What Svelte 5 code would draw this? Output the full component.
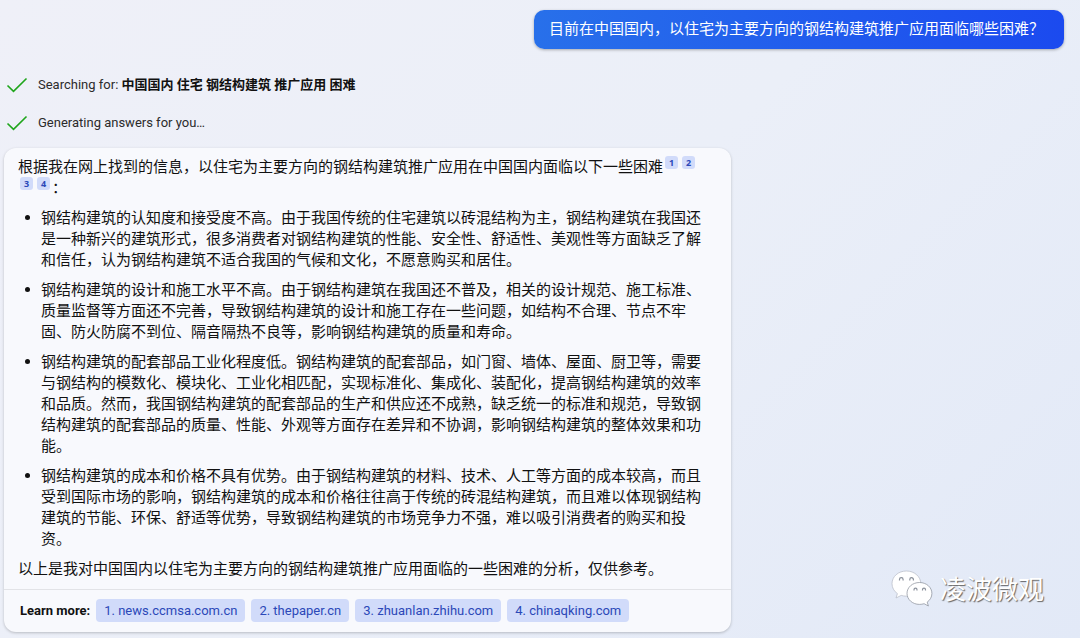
<script>
  const question = '目前在中国国内，以住宅为主要方向的钢结构建筑推广应用面临哪些困难？';
  const keywords = '中国国内 住宅 钢结构建筑 推广应用 困难';
  const points = [
    '钢结构建筑的认知度和接受度不高。由于我国传统的住宅建筑以砖混结构为主，钢结构建筑在我国还是一种新兴的建筑形式，很多消费者对钢结构建筑的性能、安全性、舒适性、美观性等方面缺乏了解和信任，认为钢结构建筑不适合我国的气候和文化，不愿意购买和居住。',
    '钢结构建筑的设计和施工水平不高。由于钢结构建筑在我国还不普及，相关的设计规范、施工标准、质量监督等方面还不完善，导致钢结构建筑的设计和施工存在一些问题，如结构不合理、节点不牢固、防火防腐不到位、隔音隔热不良等，影响钢结构建筑的质量和寿命。',
    '钢结构建筑的配套部品工业化程度低。钢结构建筑的配套部品，如门窗、墙体、屋面、厨卫等，需要与钢结构的模数化、模块化、工业化相匹配，实现标准化、集成化、装配化，提高钢结构建筑的效率和品质。然而，我国钢结构建筑的配套部品的生产和供应还不成熟，缺乏统一的标准和规范，导致钢结构建筑的配套部品的质量、性能、外观等方面存在差异和不协调，影响钢结构建筑的整体效果和功能。',
    '钢结构建筑的成本和价格不具有优势。由于钢结构建筑的材料、技术、人工等方面的成本较高，而且受到国际市场的影响，钢结构建筑的成本和价格往往高于传统的砖混结构建筑，而且难以体现钢结构建筑的节能、环保、舒适等优势，导致钢结构建筑的市场竞争力不强，难以吸引消费者的购买和投资。'
  ];
  const sources = ['news.ccmsa.com.cn', 'thepaper.cn', 'zhuanlan.zhihu.com', 'chinaqking.com'];
</script>

{#snippet check()}
  <svg class="check" viewBox="0 0 22 16" aria-hidden="true">
    <path d="M1.500 8.500 7.500 14.300 20.500 1.500" fill="none" stroke="#1fa51b" stroke-width="1.6" />
  </svg>
{/snippet}

<main>
  <div class="question">{question}</div>

  <div class="status">
    {@render check()}
    <span>Searching for: <strong>{keywords}</strong></span>
  </div>
  <div class="status">
    {@render check()}
    <span>Generating answers for you…</span>
  </div>

  <article>
    <div class="answer">
      <p>
        根据我在网上找到的信息，以住宅为主要方向的钢结构建筑推广应用在中国国内面临以下一些困难{#each sources as _, i}<a class="cite" href="#source-{i + 1}">{i + 1}</a><wbr />{/each}：
      </p>
      <ul>
        {#each points as point}
          <li>{point}</li>
        {/each}
      </ul>
      <p>以上是我对中国国内以住宅为主要方向的钢结构建筑推广应用面临的一些困难的分析，仅供参考。</p>
    </div>
    <footer>
      <b>Learn more:</b>
      {#each sources as source, i}
        <a class="source" id="source-{i + 1}" href="https://{source}">{i + 1}. {source}</a>
      {/each}
    </footer>
  </article>

  <div class="brand">
    <svg viewBox="0 0 42 37" aria-hidden="true">
      <g fill="#fff" stroke="#b4b9c4" stroke-width="0.7">
        <path d="M15.500 1C7.300 1 1 6.500 1 13.700c0 4.100 2.100 7.600 5.400 9.900L5 28l5.200-2.600c1.700.5 3.400.8 5.300.8 8 0 14.300-5.500 14.300-12.500S23.500 1 15.500 1Z" />
        <path stroke="#858b96" d="M28.500 12.500c-7 0-12.500 4.800-12.500 10.900s5.500 11 12.500 11c1.600 0 3.200-.3 4.600-.7l4.300 2.300-1.200-3.900c2.900-2 4.700-5.100 4.700-8.700 0-6.100-5.500-10.900-12.400-10.900Z" />
      </g>
      <g fill="none" stroke="#8a909b" stroke-width="1.200">
        <path d="M8.500 10.500v-1a1.800 1.800 0 0 1 3.600 0v1M18.800 10.500v-1a1.800 1.800 0 0 1 3.600 0v1M23 20.500v-.8a1.500 1.500 0 0 1 3 0v.8M31.500 20.500v-.8a1.500 1.500 0 0 1 3 0v.8" />
      </g>
    </svg>
    <span>凌波微观</span>
  </div>
</main>

<style>
  :global(body) {
    margin: 0;
  }
  main {
    position: relative;
    box-sizing: border-box;
    min-height: 100vh;
    padding: 10px 16px 6px 4px;
    display: flex;
    flex-direction: column;
    align-items: flex-start;
    background: linear-gradient(135deg, #eff0f8 0%, #ebeff8 50%, #e2e9f7 100%);
    color: #111;
    font-family: Roboto, 'Noto Sans CJK SC', sans-serif;
    font-size: 13px;
    line-height: 20px;
  }
  .question {
    align-self: flex-end;
    box-sizing: border-box;
    margin-bottom: 17px;
    padding: 7px 20px 11px 15px;
    border-radius: 10px;
    background: linear-gradient(90deg, #2870ea, #1b4aef);
    box-shadow: 0 1px 3px rgba(0, 0, 0, 0.3);
    color: #fff;
    font: 15px/21px 'Noto Sans CJK SC', sans-serif;
  }
  .status {
    display: flex;
    align-items: center;
    gap: 10px;
    height: 38px;
    padding-left: 2px;
    color: #2b2b2b;
  }
  .status strong {
    color: #111;
  }
  .check {
    width: 22px;
    height: 16px;
  }
  article {
    width: 69%;
    max-width: 727px;
    margin-top: 6px;
    border-radius: 12px;
    background: #f8f9fd;
    box-shadow: 0 1px 3px rgba(0, 0, 0, 0.22);
  }
  .answer {
    padding: 7px 18px 11px 14px;
    font: 15px/21px 'Noto Sans CJK SC', sans-serif;
  }
  p {
    margin: 0;
  }
  ul {
    display: flex;
    flex-direction: column;
    gap: 9px;
    margin: 9px 0;
    padding-left: 23px;
    list-style: none;
  }
  li::before {
    content: '';
    float: left;
    width: 5px;
    height: 5px;
    margin: 9px 0 0 -16px;
    border-radius: 50%;
    background: #111;
  }
  .cite {
    display: inline-block;
    margin: 0 2px;
    width: 13px;
    border-radius: 3px;
    background: #d1dbfa;
    color: #2b48b8;
    font: bold 9px/13px 'Open Sans', sans-serif;
    text-align: center;
    text-decoration: none;
    vertical-align: 6px;
  }
  footer {
    display: flex;
    flex-wrap: wrap;
    align-items: center;
    gap: 6px;
    padding: 9px 16px 10px;
    border-top: 1px solid #e2e3e7;
  }
  .source {
    padding: 1px 8px;
    border-radius: 4px;
    background: #d1dbfa;
    color: #2b48b8;
    line-height: 21px;
    text-decoration: none;
  }
  .brand {
    position: absolute;
    right: 36px;
    bottom: 31px;
    display: flex;
    align-items: center;
    gap: 7px;
    color: #fff;
    font: 26px/38px 'Noto Sans CJK SC', sans-serif;
    text-shadow: 1px 1px 1px #666;
  }
  .brand svg {
    width: 42px;
    height: 37px;
  }
</style>
